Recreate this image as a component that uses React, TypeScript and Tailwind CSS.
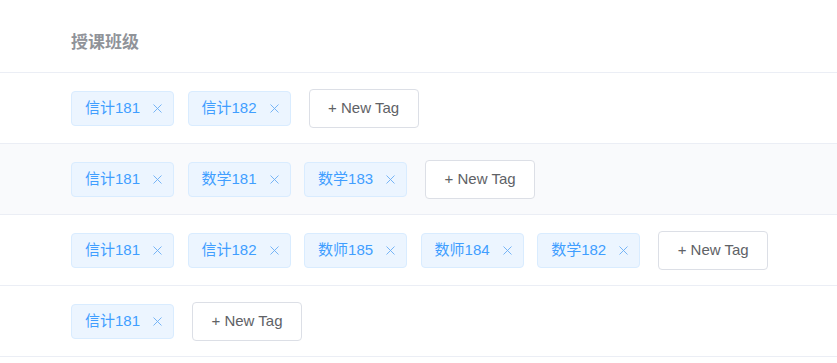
const rows: string[][] = [
  ["信计181", "信计182"],
  ["信计181", "数学181", "数学183"],
  ["信计181", "信计182", "数师185", "数师184", "数学182"],
  ["信计181"],
];

const font = {
  fontFamily: '"Liberation Sans", "Noto Sans CJK SC", sans-serif',
};

const Tag = ({ label }: { label: string }) => (
  <span className="inline-flex h-[35px] items-center rounded-[4px] border border-[#d9ecff] bg-[#ecf5ff] pl-[13px] pr-[11px] text-[15px] text-[#409eff]">
    {label}
    <svg
      width="9"
      height="9"
      viewBox="0 0 9 9"
      className="ml-[13px]"
      stroke="#6aaef5"
      strokeWidth="0.9"
    >
      <path d="M0.5 0.5 L8.5 8.5 M8.5 0.5 L0.5 8.5" />
    </svg>
  </span>
);

export default function App() {
  return (
    <div className="w-[837px] bg-white" style={font}>
      <div className="flex h-[73px] items-center border-b border-[#ebeef5] pl-[71px] pt-[14px]">
        <span className="text-[17px] font-bold text-[#909399]">授课班级</span>
      </div>
      {rows.map((tags, i) => (
        <div
          key={i}
          className={`flex h-[71px] items-center gap-[13.5px] border-b border-[#ebeef5] pl-[71px] ${
            i === 1 ? "bg-[#f9fafc]" : "bg-white"
          }`}
        >
          {tags.map((t) => (
            <Tag key={t} label={t} />
          ))}
          <button className="ml-[4.5px] h-[39px] w-[110px] rounded-[4px] border border-[#dcdfe6] bg-white text-[15px] text-[#606266]">
            + New Tag
          </button>
        </div>
      ))}
    </div>
  );
}
